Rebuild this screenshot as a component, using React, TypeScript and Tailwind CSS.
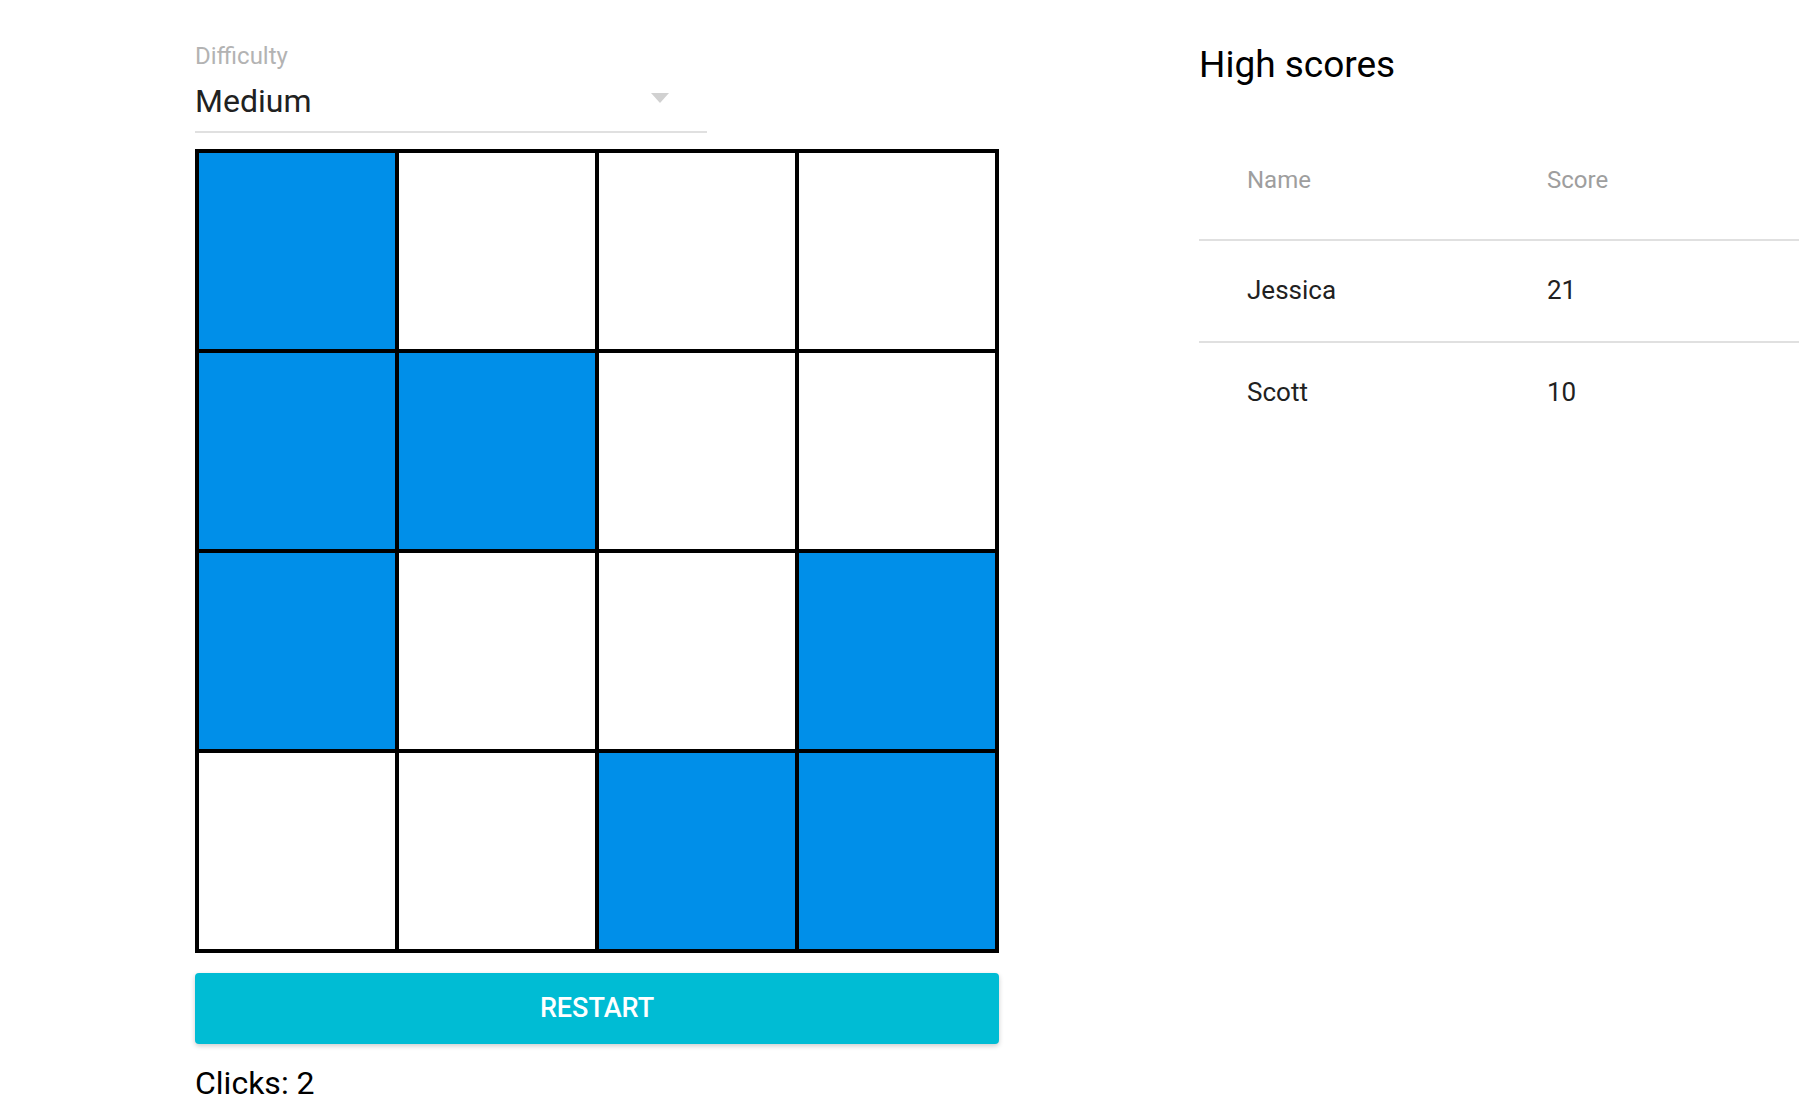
import React, { useState } from 'react';

const startGrid = [
  [1, 0, 0, 0],
  [1, 1, 0, 0],
  [1, 0, 0, 1],
  [0, 0, 1, 1],
];

const scores = [
  { name: 'Jessica', score: 21 },
  { name: 'Scott', score: 10 },
];

export default function App() {
  const [grid] = useState(startGrid);
  const [clicks] = useState(2);

  return (
    <div className="min-h-screen bg-white font-['Roboto','Liberation_Sans',sans-serif] flex">
      {/* game column */}
      <div className="pl-[195px] pt-[42px] w-[999px] shrink-0 flex flex-col">
        <div className="w-[512px]">
          <label className="block text-[24px] leading-[28px] text-[#b3b3b3]">Difficulty</label>
          <div className="relative flex items-center h-[40px] mt-[11px] border-b-2 border-[#e0e0e0] pb-[10px] box-content">
            <span className="text-[32px] leading-[38px] text-[#212121]">Medium</span>
            <svg className="absolute right-[38px] top-[12px]" width="18" height="10" viewBox="0 0 18 10">
              <path d="M0 0h18L9 10z" fill="#d1d1d1" />
            </svg>
          </div>
        </div>

        <div className="mt-[16px] w-[804px] border-2 border-black grid grid-cols-4">
          {grid.flatMap((row, r) =>
            row.map((on, c) => (
              <div
                key={`${r}-${c}`}
                className={`h-[200px] border-2 border-black ${on ? 'bg-[#008fe9]' : 'bg-white'}`}
              />
            )),
          )}
        </div>

        <button className="mt-[20px] w-[804px] h-[71px] rounded-[4px] bg-[#00bcd4] text-white text-[27px] font-medium shadow-[0_2px_5px_rgba(0,0,0,0.2)]">
          RESTART
        </button>

        <p className="mt-[20px] text-[32px] leading-[38px] text-black">Clicks: {clicks}</p>
      </div>

      {/* high scores column */}
      <div className="pl-[200px] flex-1 pt-[43px]">
        <h2 className="text-[37px] leading-[44px] text-black">High scores</h2>
        <table className="mt-[33px] w-full border-collapse">
          <thead>
            <tr className="h-[120px] border-b-2 border-[#e0e0e0]">
              <th className="w-[300px] pl-[48px] text-left font-normal text-[24px] text-[#9e9e9e]">Name</th>
              <th className="pl-[48px] text-left font-normal text-[24px] text-[#9e9e9e]">Score</th>
            </tr>
          </thead>
          <tbody>
            {scores.map((s, i) => (
              <tr
                key={s.name}
                className={`h-[102px] ${i < scores.length - 1 ? 'border-b-2 border-[#e0e0e0]' : ''}`}
              >
                <td className="pl-[48px] pb-[2px] text-[26px] text-[#212121]">{s.name}</td>
                <td className="pl-[48px] pb-[2px] text-[26px] text-[#212121]">{s.score}</td>
              </tr>
            ))}
          </tbody>
        </table>
      </div>
    </div>
  );
}
